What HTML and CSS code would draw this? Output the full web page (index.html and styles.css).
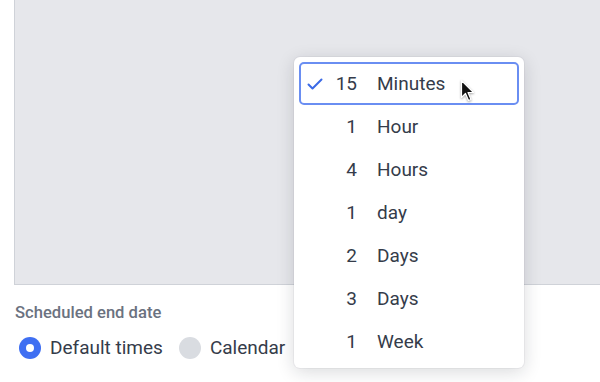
FILE: index.html
```html
<!DOCTYPE html>
<html lang="en">
<head>
<meta charset="utf-8">
<title>Scheduled end date</title>
<link rel="stylesheet" href="styles.css">
</head>
<body>
<div class="page">
  <div class="panel"></div>
  <div class="field">
    <div class="field-label">Scheduled end date</div>
    <div class="radios">
      <label class="radio">
        <span class="radio-dot checked"></span>
        <span class="radio-text">Default times</span>
      </label>
      <label class="radio">
        <span class="radio-dot"></span>
        <span class="radio-text">Calendar</span>
      </label>
    </div>
  </div>

  <ul class="menu">
    <li class="item selected">
      <span class="check">
        <svg width="16" height="14" viewBox="0 0 16 14"><path d="M1.5 7.5 L5.5 11.5 L14.5 2.5" fill="none" stroke="#3b6ae6" stroke-width="2" stroke-linecap="round" stroke-linejoin="round"/></svg>
      </span>
      <span class="num">15</span><span class="unit">Minutes</span>
    </li>
    <li class="item"><span class="check"></span><span class="num">1</span><span class="unit">Hour</span></li>
    <li class="item"><span class="check"></span><span class="num">4</span><span class="unit">Hours</span></li>
    <li class="item"><span class="check"></span><span class="num">1</span><span class="unit">day</span></li>
    <li class="item"><span class="check"></span><span class="num">2</span><span class="unit">Days</span></li>
    <li class="item"><span class="check"></span><span class="num">3</span><span class="unit">Days</span></li>
    <li class="item"><span class="check"></span><span class="num">1</span><span class="unit">Week</span></li>
  </ul>

  <svg class="cursor" width="16" height="24" viewBox="0 0 16 24">
    <path d="M1.5 1.5 L1.5 18.5 L5.5 14.5 L8.5 21.5 L11 20.5 L8 13.5 L13.5 13.5 Z" fill="#111" stroke="#fff" stroke-width="1.2" stroke-linejoin="round"/>
  </svg>
</div>
</body>
</html>
```

FILE: styles.css
```css
* { box-sizing: border-box; }
html, body {
  margin: 0;
  padding: 0;
  background: #ffffff;
}
body {
  font-family: Roboto, "Liberation Sans", sans-serif;
  color: #353c4a;
  width: 600px;
  height: 382px;
  overflow: hidden;
}
.page {
  position: relative;
  width: 600px;
  height: 382px;
}
.panel {
  margin-left: 14px;
  height: 285px;
  background: #e6e7eb;
  border-left: 1px solid #cfd2d8;
  border-bottom: 1px solid #cfd2d8;
}
.field {
  padding: 18px 0 0 15px;
}
.field-label {
  font-size: 16.6px;
  font-weight: 500;
  color: #6b7280;
  line-height: 20px;
}
.radios {
  display: flex;
  align-items: center;
  margin-top: 13px;
  padding-left: 4px;
}
.radio {
  display: flex;
  align-items: center;
  margin-right: 16px;
}
.radio-dot {
  width: 22px;
  height: 22px;
  border-radius: 50%;
  background: #d9dce1;
  margin-right: 9px;
  position: relative;
}
.radio-dot.checked {
  background: #3f6ff2;
}
.radio-dot.checked::after {
  content: "";
  position: absolute;
  left: 7px;
  top: 7px;
  width: 8px;
  height: 8px;
  border-radius: 50%;
  background: #ffffff;
}
.radio-text {
  font-size: 19px;
  line-height: 24px;
  color: #353c4a;
}
.menu {
  position: absolute;
  left: 294px;
  top: 57px;
  width: 230px;
  height: 311px;
  margin: 0;
  padding: 5px;
  list-style: none;
  background: #ffffff;
  border-radius: 6px;
  box-shadow: 0 4px 18px rgba(20, 24, 40, 0.16), 0 0 0 1px rgba(20, 24, 40, 0.04);
}
.item {
  display: flex;
  align-items: center;
  height: 43px;
  padding-left: 6px;
  border: 2px solid transparent;
  border-radius: 5px;
  font-size: 19px;
  color: #353c4a;
}
.item.selected {
  border-color: #6a8ef2;
}
.check {
  width: 16px;
  height: 14px;
  display: flex;
}
.num {
  width: 34px;
  text-align: right;
}
.unit {
  margin-left: 20px;
}
.cursor {
  position: absolute;
  left: 460px;
  top: 79px;
  filter: drop-shadow(0 1px 1px rgba(0,0,0,0.35));
}
```
